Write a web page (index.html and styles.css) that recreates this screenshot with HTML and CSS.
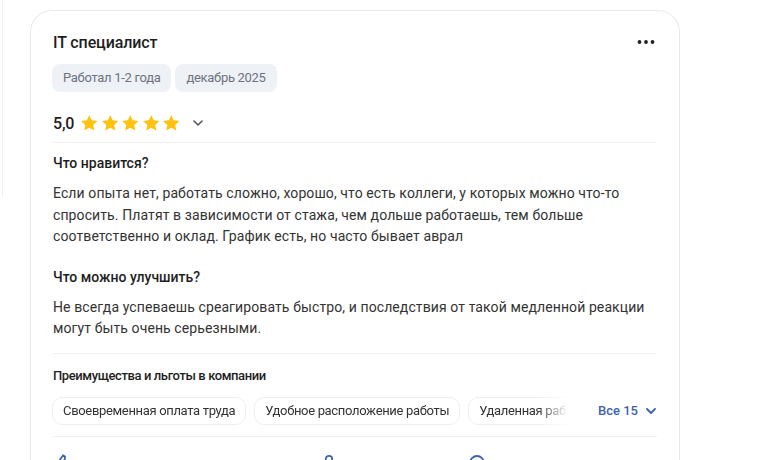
FILE: index.html
```html
<!DOCTYPE html>
<html lang="ru">
<head>
<meta charset="utf-8">
<link rel="stylesheet" href="styles.css">
</head>
<body>
<div class="side"></div>
<div class="card">
  <div class="head">
    <div class="title">IT специалист</div>
    <svg class="dots" width="18" height="6" viewBox="0 0 18 6"><circle cx="2.5" cy="3" r="1.9"/><circle cx="9" cy="3" r="1.9"/><circle cx="15.5" cy="3" r="1.9"/></svg>
  </div>
  <div class="tags">
    <span class="tag">Работал 1-2 года</span>
    <span class="tag">декабрь 2025</span>
  </div>
  <div class="rating">
    <span class="score">5,0</span>
    <span class="stars">
      <svg viewBox="0 0 24 24"><path d="M12 2.5l2.9 6.1 6.6.8-4.9 4.6 1.3 6.6L12 17.3l-5.9 3.3 1.3-6.6-4.9-4.6 6.6-.8z"/></svg>
      <svg viewBox="0 0 24 24"><path d="M12 2.5l2.9 6.1 6.6.8-4.9 4.6 1.3 6.6L12 17.3l-5.9 3.3 1.3-6.6-4.9-4.6 6.6-.8z"/></svg>
      <svg viewBox="0 0 24 24"><path d="M12 2.5l2.9 6.1 6.6.8-4.9 4.6 1.3 6.6L12 17.3l-5.9 3.3 1.3-6.6-4.9-4.6 6.6-.8z"/></svg>
      <svg viewBox="0 0 24 24"><path d="M12 2.5l2.9 6.1 6.6.8-4.9 4.6 1.3 6.6L12 17.3l-5.9 3.3 1.3-6.6-4.9-4.6 6.6-.8z"/></svg>
      <svg viewBox="0 0 24 24"><path d="M12 2.5l2.9 6.1 6.6.8-4.9 4.6 1.3 6.6L12 17.3l-5.9 3.3 1.3-6.6-4.9-4.6 6.6-.8z"/></svg>
    </span>
    <svg class="chev" width="10" height="6" viewBox="0 0 10 6"><path d="M1 1l4 4 4-4" fill="none" stroke="#555" stroke-width="1.6" stroke-linecap="round" stroke-linejoin="round"/></svg>
  </div>
  <div class="section">
    <div class="sec-title">Что нравится?</div>
    <p class="text">Если опыта нет, работать сложно, хорошо, что есть коллеги, у которых можно что-то спросить. Платят в зависимости от стажа, чем дольше работаешь, тем больше соответственно и оклад. График есть, но часто бывает аврал</p>
    <div class="sec-title second">Что можно улучшить?</div>
    <p class="text">Не всегда успеваешь среагировать быстро, и последствия от такой медленной реакции могут быть очень серьезными.</p>
  </div>
  <div class="benefits">
    <div class="ben-title">Преимущества и льготы в компании</div>
    <div class="ben-row">
      <div class="chips">
        <span class="chip">Своевременная оплата труда</span>
        <span class="chip">Удобное расположение работы</span>
        <span class="chip">Удаленная работа</span>
      </div>
      <span class="more">Все 15
        <svg width="10" height="6" viewBox="0 0 10 6"><path d="M1 1l4 4 4-4" fill="none" stroke="#3d63ad" stroke-width="1.8" stroke-linecap="round" stroke-linejoin="round"/></svg>
      </span>
    </div>
  </div>
  <div class="actions">
    <span class="act a1"><svg width="16" height="16" viewBox="0 0 16 16"><path d="M8 1.5l-3 4v8h7l2-6H9.5l.5-5z" fill="none" stroke="#3d63ad" stroke-width="1.8"/></svg></span>
    <span class="act a2"><svg width="16" height="16" viewBox="0 0 16 16"><circle cx="8" cy="5" r="3.2" fill="none" stroke="#3d63ad" stroke-width="1.8"/></svg></span>
    <span class="act a3"><svg width="18" height="18" viewBox="0 0 18 18"><circle cx="9" cy="9" r="7" fill="none" stroke="#3d63ad" stroke-width="1.8"/></svg></span>
  </div>
</div>
</body>
</html>
```
FILE: styles.css
```css
* { box-sizing: border-box; }
html, body { margin: 0; padding: 0; background: #fff; }
body {
  display: flex;
  align-items: flex-start;
  font-family: Roboto, "Noto Sans", sans-serif;
  color: #222;
  height: 460px;
  overflow: hidden;
}
.side {
  width: 3px;
  height: 197px;
  border-right: 1px solid #efefef;
  flex: none;
}
.card {
  margin-left: 27px;
  margin-top: 10px;
  width: 650px;
  height: 450px;
  overflow: hidden;
  border: 1px solid #e7e9ed;
  border-bottom: none;
  border-radius: 22px 22px 0 0;
  padding: 20px 22px 0 22px;
  flex: none;
}
.head {
  display: flex;
  justify-content: space-between;
  align-items: center;
  height: 24px;
}
.title {
  font-size: 16px;
  font-weight: 500;
  line-height: 24px;
  color: #1e1e1e;
  letter-spacing: -0.1px;
}
.dots { fill: #222; margin-right: 2px; margin-top: -3px; }
.tags {
  display: flex;
  gap: 4px;
  margin-top: 9px;
  margin-left: -1px;
}
.tag {
  height: 28px;
  line-height: 28px;
  padding: 0 11px;
  background: #eef1f6;
  border-radius: 8px;
  font-size: 13px;
  letter-spacing: -0.3px;
  color: #6c7380;
}
.rating {
  display: flex;
  align-items: center;
  height: 24px;
  margin-top: 19px;
}
.score { font-size: 16px; font-weight: 500; color: #1e1e1e; letter-spacing: -0.2px; }
.stars { display: flex; gap: 0; margin-left: 5px; }
.stars svg { width: 20.5px; height: 20.5px; fill: #ffc20e; }
.chev { margin-left: 11px; }
.section {
  border-top: 1px solid #f0f1f4;
  margin-top: 7px;
  padding-top: 10px;
}
.sec-title {
  font-size: 14px;
  font-weight: 500;
  line-height: 20px;
  color: #1e1e1e;
}
.sec-title.second { margin-top: 19px; }
.text {
  margin: 10px 0 0 0;
  font-size: 14px;
  line-height: 21.5px;
  letter-spacing: 0.1px;
  color: #333;
}
.benefits {
  border-top: 1px solid #f0f1f4;
  margin-top: 13px;
  padding-top: 13px;
}
.ben-title {
  font-size: 13px;
  font-weight: 500;
  line-height: 18px;
  letter-spacing: -0.4px;
  color: #1e1e1e;
}
.ben-row {
  display: flex;
  align-items: center;
  margin-top: 12px;
  margin-left: -1px;
}
.chips {
  display: flex;
  gap: 8px;
  width: 516px;
  flex: none;
  overflow: hidden;
  white-space: nowrap;
  -webkit-mask-image: linear-gradient(to right, #000 486px, transparent 516px);
  mask-image: linear-gradient(to right, #000 486px, transparent 516px);
}
.chip {
  height: 28px;
  line-height: 26px;
  padding: 0 10px;
  border: 1px solid #eceef2;
  border-radius: 10px;
  font-size: 13px;
  letter-spacing: -0.33px;
  color: #333;
  flex: none;
}
.more {
  margin-left: 30px;
  display: flex;
  align-items: center;
  gap: 8px;
  white-space: nowrap;
  flex: none;
  font-size: 13px;
  font-weight: 500;
  color: #3d63ad;
}
.actions {
  border-top: 1px solid #f0f1f4;
  margin-top: 11px;
  padding-top: 17px;
  display: flex;
}
.act { display: flex; }
.a1 { margin-left: 2px; }
.a2 { margin-left: 250px; }
.a3 { margin-left: 131px; }
```
